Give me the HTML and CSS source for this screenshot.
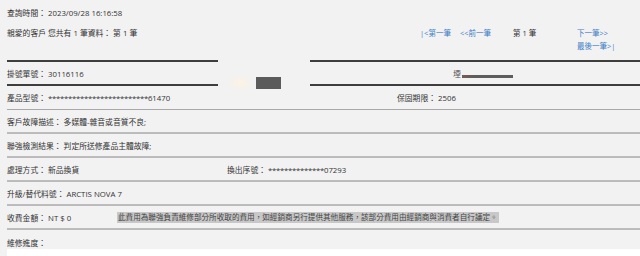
FILE: index.html
```html
<!DOCTYPE html>
<html lang="zh-Hant">
<head>
<meta charset="utf-8">
<title>維修查詢</title>
<link rel="stylesheet" href="styles.css">
</head>
<body>
<div class="page">
  <div class="query">查詢時間： 2023/09/28 16:16:58</div>
  <div class="summary">
    <div class="count">親愛的客戶 您共有 1 筆資料： 第 1 筆</div>
    <nav class="pager">
      <a class="link" href="#">|&lt;第一筆</a>
      <a class="link" href="#">&lt;&lt;前一筆</a>
      <span class="current">第 1 筆</span>
      <div class="pager-end">
        <a class="link" href="#">下一筆&gt;&gt;</a>
        <a class="link" href="#">最後一筆&gt;|</a>
      </div>
    </nav>
  </div>

  <div class="reg-row">
    <div class="reg-cell">掛號單號： 30116116</div>
    <div class="reg-mid"><span class="blur"></span><span class="mask"></span></div>
    <div class="reg-cell reg-right">堙<span class="redact"></span></div>
  </div>

  <div class="row row-product">
    <div class="cols cols-warranty">
      <span>產品型號： <span class="masked">*************************</span>61470</span>
      <span>保固期限： 2506</span>
    </div>
  </div>
  <div class="row"><span>客戶故障描述： 多媒體-雜音或音質不良;</span></div>
  <div class="row"><span>聯強檢測結果： 判定所送修產品主體故障;</span></div>
  <div class="row">
    <div class="cols cols-serial">
      <span>處理方式： 新品換貨</span>
      <span>換出序號： <span class="masked">**************</span>07293</span>
    </div>
  </div>
  <div class="row"><span>升級/替代料號： ARCTIS NOVA 7</span></div>
  <div class="row">
    <div class="cols cols-fee">
      <span>收費金額： NT $ 0</span>
      <span class="note">此費用為聯強負責維修部分所收取的費用，如經銷商另行提供其他服務，該部分費用由經銷商與消費者自行議定。</span>
    </div>
  </div>
  <div class="row row-last"><span>維修進度：</span></div>
  <div class="progress-box"></div>
</div>
</body>
</html>
```

FILE: styles.css
```css
html, body {
  margin: 0;
  padding: 0;
  background: #f2f2f2;
}
body {
  font-family: "Open Sans", "Noto Sans CJK TC", sans-serif;
  font-size: 7.8px;
  color: #333333;
  width: 640px;
  height: 256px;
  overflow: hidden;
}
.page {
  padding-left: 7px;
}
.query {
  height: 26px;
  line-height: 26px;
}
.summary {
  height: 34px;
  display: flex;
}
.count {
  width: 413px;
  line-height: 13px;
  padding-top: 0.5px;
}
.pager {
  display: grid;
  grid-template-columns: 40px 53px 64px auto;
  line-height: 13px;
  padding-top: 0.5px;
  font-size: 7.5px;
}
.link {
  color: #3f7ec6;
  text-decoration: none;
}
.current {
  color: #333;
}
.pager-end {
  display: flex;
  flex-direction: column;
}

.reg-row {
  display: grid;
  grid-template-columns: 211px 92px 1fr;
  height: 26px;
}
.reg-cell {
  border-top: 2px solid #3e3e3e;
  border-bottom: 2px solid #3e3e3e;
  line-height: 22px;
  padding-top: 1px;
  height: 21px;
}
.reg-right {
  padding-left: 143px;
  color: #555;
}
.redact {
  display: inline-block;
  width: 51px;
  height: 3px;
  margin-left: 1px;
  vertical-align: -1px;
  background: linear-gradient(90deg, #7a5a55 0%, #5d5d5d 25%, #5d5d5d 100%);
}
.reg-mid {
  display: flex;
  align-items: flex-start;
  padding-top: 17px;
  padding-left: 12px;
  gap: 6px;
}
.blur {
  width: 20px;
  height: 12px;
  background: radial-gradient(ellipse at center, #fdf3e6 0%, #f6f1ea 60%, #f2f2f2 100%);
}
.mask {
  width: 25px;
  height: 12px;
  background: #5b5b5c;
}

.row {
  height: 21.6px;
  border-bottom: 2px solid #bcbcbc;
  display: flex;
  align-items: center;
  padding-top: 0.5px;
}
.row-product {
  height: 23px;
  border-bottom: 1px solid #a9a9a9;
  padding-top: 0;
}
.row-last {
  border-bottom: none;
  padding-top: 6px;
  height: 13px;
}
.cols {
  display: grid;
  width: 100%;
  align-items: center;
}
.cols-warranty {
  grid-template-columns: 390px 1fr;
}
.cols-serial {
  grid-template-columns: 220px 1fr;
}
.cols-fee {
  grid-template-columns: 110px 1fr;
}
.masked {
  letter-spacing: -0.3px;
}
.note {
  justify-self: start;
  background: #c8c8c8;
  color: #444;
  font-size: 7.6px;
  line-height: 11px;
  padding: 0 1px;
}
.progress-box {
  height: 8px;
  background: #ffffff;
}
```
